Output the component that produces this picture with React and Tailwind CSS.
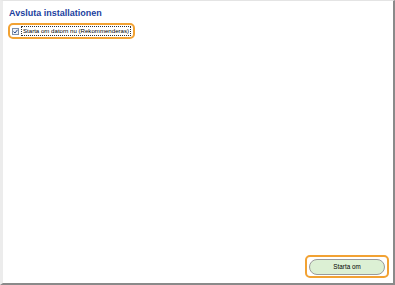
export default function App() {
  return (
    <div className="w-[395px] h-[285px] bg-white flex flex-col border-t border-t-[#e4e4e4] border-l-[3px] border-l-[#ececec] border-r-[2px] border-r-[#8a8a8a] border-b-[2px] border-b-[#8a8a8a] font-['Liberation_Sans',Arial,sans-serif]">
      <div className="flex-1 flex flex-col pl-[6px] pt-[7px]">
        <h1 className="text-[9px] font-bold text-[#1c3f9e] leading-[11px]">Avsluta installationen</h1>
        <div className="mt-[4px] ml-[-1px] self-start border-2 border-[#f2a233] rounded-[5px] px-[2px] py-[1px] flex items-center gap-[2px]">
          <span className="w-[7px] h-[7px] border border-[#7f8fa8] bg-[#eef2f8] flex items-center justify-center">
            <svg width="5" height="5" viewBox="0 0 5 5">
              <path d="M0.5 2.5 L2 4 L4.5 0.8" stroke="#2a4a8a" strokeWidth="1" fill="none" />
            </svg>
          </span>
          <span className="text-[6.1px] leading-[8px] text-black border border-dotted border-[#333] px-[1px]">
            Starta om datorn nu (Rekommenderas)
          </span>
        </div>
      </div>
      <div className="flex justify-end pr-[4px] pb-[5px]">
        <div className="border-2 border-[#f2a233] rounded-[5px] px-[2px] py-[1.5px]">
          <button className="w-[76px] h-[16px] rounded-full border border-[#9a9a9a] bg-[#dcf0d4] text-[6.3px] text-black flex items-center justify-center">
            Starta om
          </button>
        </div>
      </div>
    </div>
  );
}
